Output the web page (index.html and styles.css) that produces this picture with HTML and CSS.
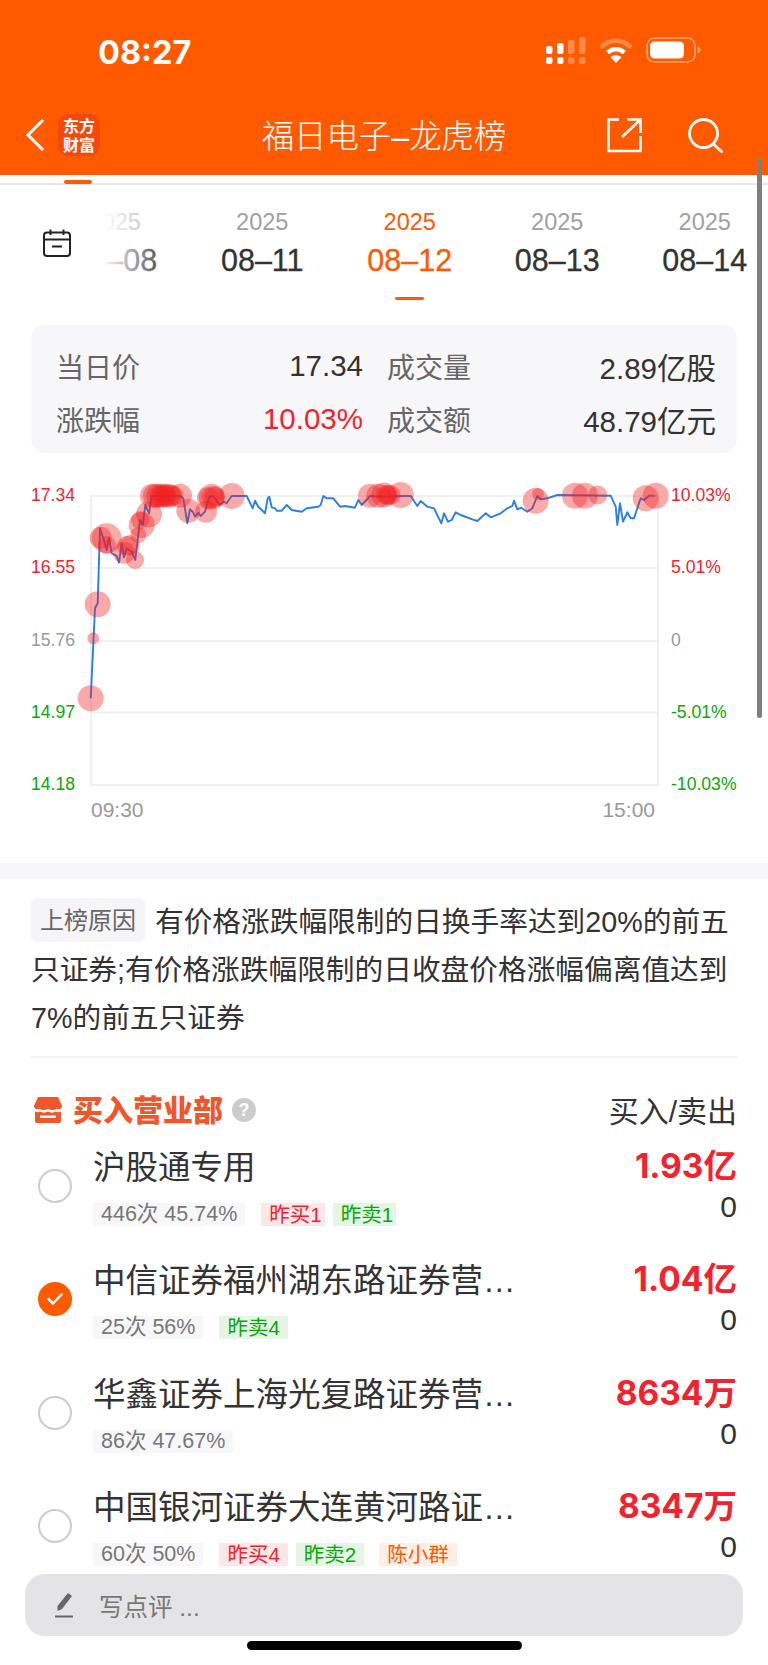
FILE: index.html
```html
<!DOCTYPE html>
<html lang="zh-CN">
<head>
    <meta charset="UTF-8">
    <meta name="viewport" content="width=device-width, initial-scale=1.0">
    <title>福日电子-龙虎榜</title>
    <link rel="stylesheet" href="styles.css">
</head>
<body>
<div class="page">

    <!-- Orange header -->
    <header class="header">
        <div class="status">
            <span class="time">08:27</span>
            <div class="status-icons">
                <svg class="signal" width="40" height="27" viewBox="0 0 40 27" fill="#fff">
                    <rect x="0" y="9" width="6.500" height="8" rx="2.200"/>
                    <rect x="0" y="20" width="6.500" height="7" rx="2.200"/>
                    <rect x="11" y="6" width="6.500" height="11" rx="2.200"/>
                    <rect x="11" y="20" width="6.500" height="7" rx="2.200"/>
                    <g opacity=".3">
                        <rect x="22" y="3" width="6.500" height="14" rx="2.200"/>
                        <rect x="22" y="20" width="6.500" height="7" rx="2.200"/>
                        <rect x="33" y="0" width="6.500" height="17" rx="2.200"/>
                        <rect x="33" y="20" width="6.500" height="7" rx="2.200"/>
                    </g>
                </svg>
                <svg class="wifi" width="34" height="25" viewBox="0 0 34 25" fill="none" stroke="#fff" stroke-width="4.500">
                    <path opacity=".3" d="M2 9.500C10.500 .5 23.500 .5 32 9.500"/>
                    <path d="M8.500 14.500C13.500 10 20.500 10 25.500 14.500"/>
                    <path fill="#fff" stroke="none" d="M17 25 11.500 19C14.800 16.500 19.200 16.500 22.500 19Z"/>
                </svg>
                <svg class="battery" width="55" height="26" viewBox="0 0 55 26" fill="none">
                    <rect x="1" y="1" width="48" height="24" rx="7.500" stroke="#fff" stroke-opacity=".45" stroke-width="1.600"/>
                    <rect x="4" y="4.500" width="34" height="17" rx="4.500" fill="#fff"/>
                    <path d="M51.500 9.500c2 .6 3 2 3 3.500s-1 2.900-3 3.500z" fill="#fff" fill-opacity=".45"/>
                </svg>
            </div>
        </div>
        <div class="nav">
            <div class="nav-left">
                <svg width="20" height="32" viewBox="0 0 20 32" fill="none" stroke="#fff" stroke-width="3" stroke-linecap="square">
                    <path d="M17 2 3 16l14 14"/>
                </svg>
                <div class="logo">东方<br>财富</div>
            </div>
            <div class="nav-title">福日电子–龙虎榜</div>
            <div class="nav-right">
                <svg width="35" height="35" viewBox="0 0 35 35" fill="none" stroke="#fff" stroke-width="2.600">
                    <path d="M12 1.500H1.500V33H33.500V18"/>
                    <path d="M15 19 33.500 1.500M20 1.500H33.500V15"/>
                </svg>
                <svg width="35" height="35" viewBox="0 0 35 35" fill="none" stroke="#fff" stroke-width="2.800">
                    <circle cx="15.500" cy="15.500" r="14"/>
                    <path d="M26 26.500 33.500 33.500" stroke-linecap="round"/>
                </svg>
            </div>
        </div>
    </header>

    <div class="subtab"><span class="subtab-mark"></span></div>

    <!-- Date strip -->
    <div class="dates">
        <div class="cal">
            <svg width="28" height="28" viewBox="0 0 28 28" fill="none" stroke="#222" stroke-width="2">
                <rect x="1" y="3.500" width="26" height="23.500" rx="3"/>
                <path d="M1 10.500H27M7.500 .5V6M20.500 .5V6M9 17.500H19"/>
            </svg>
        </div>
        <div class="date-strip">
            <div class="date first"><span class="year">2025</span><span class="day">08–08</span></div>
            <div class="date"><span class="year">2025</span><span class="day">08–11</span></div>
            <div class="date active"><span class="year">2025</span><span class="day">08–12</span><span class="date-mark"></span></div>
            <div class="date"><span class="year">2025</span><span class="day">08–13</span></div>
            <div class="date"><span class="year">2025</span><span class="day">08–14</span></div>
            <div class="date-fade"></div>
        </div>
    </div>

    <!-- Day summary -->
    <div class="stats">
        <div class="stat"><span class="label">当日价</span><span class="val">17.34</span></div>
        <div class="stat"><span class="label">成交量</span><span class="val">2.89亿股</span></div>
        <div class="stat"><span class="label">涨跌幅</span><span class="val red">10.03%</span></div>
        <div class="stat"><span class="label">成交额</span><span class="val">48.79亿元</span></div>
    </div>

    <!-- Intraday chart -->
    <svg class="chart" width="768" height="398" viewBox="0 465 768 398">
        <g fill="none" stroke="#f0f0f0" stroke-width="2">
            <path d="M91 496H658V785H91Z"/>
            <path d="M91 568H658M91 641H658M91 712.500H658"/>
        </g>
        <path fill="none" stroke="#2b7de9" stroke-width="1.900" stroke-linejoin="round" d="M90.700 698.300 95 608.300 97.700 603.300 100 528.300 103.300 538.300 106.700 550 109 538.300 111.700 553.300 116.700 556 119 562.700 121.700 543.300 124 557.300 126.700 548.300 131.700 551.700 135.300 560 140 520 142.700 525 145.300 505 149 513.300 151.700 496 180 496 183.300 498.300 187.300 523.300 190 509.300 192.700 511.700 195 516.700 198.300 512.700 200.700 516 205 511.700 209.300 496.700 213.300 496 220 505 224 501.700 226.700 503.300 231.700 496 246.700 496 252.700 508.300 255 500.700 258.300 506.700 265 513.300 267.700 498.300 269.300 496.700 271.700 507.300 275 508.300 276.700 510.700 281.700 510.700 286.700 505 291.700 510 301.700 511.700 306.700 508.300 318.300 506.700 320.700 505 323.300 496 326.700 498.300 333.300 498.300 340 506.700 345 506 355 507.700 358.300 500 361.700 505 370 496 384 496.700 404 496 410.700 496 417.300 506 420.700 501 427.300 506.700 434 508.300 441.300 523.300 444 513.300 448 521.700 451.700 520 455.700 512.300 460.700 515 472.300 519.300 477.300 521 485.700 513.300 490.700 517.300 500.700 513.300 507.300 508.300 512.300 506 514 500.700 517.300 509.300 521.300 507.700 527.300 511.700 532.300 508.300 537.300 496 540.700 499.300 547.300 498.300 557.300 495 610.700 495.700 615.700 506.700 617.300 525 620 503.300 623 521.700 627.300 512.300 630.700 518.300 634 518.300 640.700 498.300 644 500 649 495.700 654.700 495.700"/>
        <g fill="#f21e1e" fill-opacity=".38">
            <circle cx="90.700" cy="698.300" r="13"/>
            <circle cx="97.700" cy="604.300" r="13"/>
            <circle cx="93.300" cy="638.300" r="6"/>
            <circle cx="100.700" cy="537.700" r="11"/>
            <circle cx="106.700" cy="538.300" r="15"/>
            <circle cx="106.700" cy="545" r="9"/>
            <circle cx="124" cy="552.700" r="11"/>
            <circle cx="127" cy="546" r="10"/>
            <circle cx="130" cy="545" r="10"/>
            <circle cx="135" cy="560" r="9"/>
            <circle cx="138.300" cy="535" r="8"/>
            <circle cx="141.700" cy="525" r="13"/>
            <circle cx="149" cy="514.300" r="13"/>
            <circle cx="140" cy="520" r="9"/>
            <circle cx="152" cy="495.700" r="12"/>
            <circle cx="155" cy="495.700" r="12"/>
            <circle cx="158.300" cy="495.700" r="12"/>
            <circle cx="160.500" cy="495.700" r="11"/>
            <circle cx="163.300" cy="495.700" r="12"/>
            <circle cx="165.500" cy="495.700" r="11"/>
            <circle cx="168.300" cy="495.700" r="12"/>
            <circle cx="171" cy="495.700" r="11"/>
            <circle cx="173.300" cy="495.700" r="10"/>
            <circle cx="180" cy="495.700" r="12"/>
            <circle cx="188.300" cy="510.700" r="12"/>
            <circle cx="206" cy="511.700" r="11"/>
            <circle cx="211.700" cy="496.700" r="13"/>
            <circle cx="213" cy="497" r="11"/>
            <circle cx="215" cy="496.700" r="10"/>
            <circle cx="208" cy="498.300" r="11"/>
            <circle cx="231.700" cy="496" r="13"/>
            <circle cx="370" cy="495.700" r="12"/>
            <circle cx="378.300" cy="495.700" r="12"/>
            <circle cx="384" cy="495" r="12.500"/>
            <circle cx="386" cy="495" r="10"/>
            <circle cx="388" cy="495" r="10"/>
            <circle cx="390.700" cy="495" r="10"/>
            <circle cx="400.700" cy="495" r="13"/>
            <circle cx="535.700" cy="500.700" r="13"/>
            <circle cx="538" cy="494" r="6"/>
            <circle cx="575" cy="495.700" r="13"/>
            <circle cx="585" cy="495.700" r="13"/>
            <circle cx="597.700" cy="495" r="9.500"/>
            <circle cx="645.700" cy="498.300" r="13"/>
            <circle cx="655.700" cy="495.700" r="13"/>
        </g>
        <g class="axis">
            <text x="75" y="501.300" text-anchor="end" fill="#f5222d">17.34</text>
            <text x="75" y="573.300" text-anchor="end" fill="#f5222d">16.55</text>
            <text x="75" y="646.300" text-anchor="end" fill="#999">15.76</text>
            <text x="75" y="718.300" text-anchor="end" fill="#0aa70a">14.97</text>
            <text x="75" y="790.300" text-anchor="end" fill="#0aa70a">14.18</text>
            <text x="671" y="501.300" fill="#f5222d">10.03%</text>
            <text x="671" y="573.300" fill="#f5222d">5.01%</text>
            <text x="671" y="646.300" fill="#999">0</text>
            <text x="671" y="718.300" fill="#0aa70a">-5.01%</text>
            <text x="671" y="790.300" fill="#0aa70a">-10.03%</text>
        </g>
        <text class="axis-time" x="91" y="816.500" fill="#999">09:30</text>
        <text class="axis-time" x="655" y="816.500" text-anchor="end" fill="#999">15:00</text>
    </svg>

    <div class="band"></div>

    <!-- Listing reason -->
    <div class="reason">
        <span class="reason-tag">上榜原因</span>有价格涨跌幅限制的日换手率达到20%的前五只证券;有价格涨跌幅限制的日收盘价格涨幅偏离值达到7%的前五只证券
    </div>
    <div class="divider"></div>

    <!-- Buy side list -->
    <div class="list-head">
        <svg width="28" height="26" viewBox="0 0 28 26">
            <path fill="#f0562a" d="M4 0H24L28 9C28 12 25 13 22.500 11.500 20 13.500 17 13.500 14 11.500 11 13.500 8 13.500 5.500 11.500 3 13 0 12 0 9Z"/>
            <path fill="#f0562a" d="M1 14.500C3 15.500 5 15.500 6 14.500 9 16 11 16 14 14.500 17 16 19 16 22 14.500 23 15.500 25 15.500 27 14.500V24C27 25 26 26 25 26H3C2 26 1 25 1 24Z"/>
            <path fill="#fff" d="M6 18.500H22V21H6Z"/>
        </svg>
        <span class="list-title">买入营业部</span>
        <span class="help">?</span>
        <span class="list-cols">买入/卖出</span>
    </div>

    <div class="row">
        <span class="radio"></span>
        <div class="row-main">
            <div class="name">沪股通专用</div>
            <div class="tags"><span class="tag grey">446次 45.74%</span><span class="tag pink narrow">昨买1</span><span class="tag green narrow">昨卖1</span></div>
        </div>
        <div class="row-nums"><span class="buy">1.93亿</span><span class="sell">0</span></div>
    </div>
    <div class="row">
        <span class="radio on">
            <svg width="18" height="14" viewBox="0 0 18 14" fill="none" stroke="#fff" stroke-width="2.500" stroke-linecap="round" stroke-linejoin="round"><path d="M2.500 7 7 11.500 15.500 2.500"/></svg>
        </span>
        <div class="row-main">
            <div class="name">中信证券福州湖东路证券营业部</div>
            <div class="tags"><span class="tag grey">25次 56%</span><span class="tag green">昨卖4</span></div>
        </div>
        <div class="row-nums"><span class="buy">1.04亿</span><span class="sell">0</span></div>
    </div>
    <div class="row">
        <span class="radio"></span>
        <div class="row-main">
            <div class="name">华鑫证券上海光复路证券营业部</div>
            <div class="tags"><span class="tag grey">86次 47.67%</span></div>
        </div>
        <div class="row-nums"><span class="buy">8634万</span><span class="sell">0</span></div>
    </div>
    <div class="row">
        <span class="radio"></span>
        <div class="row-main">
            <div class="name">中国银河证券大连黄河路证券营业部</div>
            <div class="tags"><span class="tag grey">60次 50%</span><span class="tag pink">昨买4</span><span class="tag green">昨卖2</span><span class="tag orange">陈小群</span></div>
        </div>
        <div class="row-nums"><span class="buy">8347万</span><span class="sell">0</span></div>
    </div>

    <!-- Overlays -->
    <div class="scrollbar"></div>
    <div class="comment">
        <svg width="20" height="26" viewBox="0 0 20 26" fill="#666">
            <path d="M14 1 18 4 8 17 3.500 19 3.500 14Z"/>
            <path d="M1 23.500H19V25.500H1Z"/>
        </svg>
        <span>写点评 ...</span>
    </div>
    <div class="home"></div>
</div>
</body>
</html>
```

FILE: styles.css
```css
* {
    box-sizing: border-box;
}
body {
    margin: 0;
    background: #fff;
    font-family: "Liberation Sans", "Noto Sans CJK SC", sans-serif;
    color: #333;
}
.page {
    position: relative;
    width: 768px;
    height: 1665px;
    overflow: hidden;
}

/* header */
.header {
    height: 175px;
    background: #ff5a00;
    color: #fff;
}
.status {
    height: 105px;
    padding: 35px 67px 0 98px;
    display: flex;
    justify-content: space-between;
}
.time {
    font-family: Inter, sans-serif;
    font-weight: 700;
    font-size: 32.5px;
    line-height: 36px;
}
.status-icons {
    display: flex;
    align-items: center;
    height: 36px;
    gap: 13px;
    margin-top: -3px;
}
.nav {
    height: 70px;
    padding: 8px 45px 0 25px;
    display: flex;
    align-items: flex-start;
    justify-content: space-between;
    position: relative;
}
.nav-left {
    display: flex;
    align-items: center;
    gap: 13px;
    height: 44px;
}
.logo {
    width: 42px;
    height: 42px;
    border-radius: 10px;
    background: #f4490d;
    font-size: 16px;
    line-height: 19px;
    font-weight: 700;
    text-align: center;
    padding-top: 2px;
    font-family: "Noto Sans CJK SC", sans-serif;
}
.nav-title {
    position: absolute;
    left: 150px;
    right: 150px;
    top: 0;
    text-align: center;
    font-size: 32.4px;
    line-height: 64px;
    font-weight: 300;
}
.nav-right {
    display: flex;
    gap: 46px;
    margin-top: 5px;
}

.subtab {
    height: 10px;
    border-bottom: 2px solid #e8e8e8;
    padding-left: 64px;
    padding-top: 5px;
}
.subtab-mark {
    display: block;
    width: 28px;
    height: 4px;
    border-radius: 2px;
    background: #ff5a00;
}

/* dates */
.dates {
    display: flex;
    height: 140px;
}
.cal {
    width: 100px;
    flex: none;
    padding: 44px 0 0 43px;
}
.date-strip {
    flex: 1;
    display: flex;
    position: relative;
    overflow: hidden;
}
.date {
    flex: none;
    width: 147.5px;
    display: flex;
    flex-direction: column;
    align-items: center;
    padding-top: 23px;
}
.date.first {
    margin-left: -59px;
}
.year {
    font-size: 23.5px;
    line-height: 28px;
    color: #a0a0a0;
}
.day {
    font-size: 30.5px;
    line-height: 34px;
    margin-top: 7px;
    color: #333;
    -webkit-text-stroke: .3px currentColor;
}
.active .year, .active .day {
    color: #ff5a00;
}
.date-mark {
    width: 29px;
    height: 3px;
    margin-top: 20px;
    border-radius: 2px;
    background: #ff5a00;
}
.date-fade {
    position: absolute;
    left: 0;
    top: 0;
    bottom: 0;
    width: 70px;
    background: linear-gradient(to right, #fff 5%, rgba(255, 255, 255, 0));
}

/* stats */
.stats {
    margin: 0 31px;
    height: 128px;
    padding: 15px 21px 0 25px;
    background: #f7f7f9;
    border-radius: 14px;
    display: grid;
    grid-template-columns: 331px 1fr;
    grid-auto-rows: 52.5px;
}
.stat {
    display: flex;
    justify-content: space-between;
    align-items: center;
    font-size: 28px;
}
.stat:nth-child(odd) {
    padding-right: 24px;
}
.label {
    color: #666;
}
.val {
    color: #333;
    font-size: 29.5px;
}
.red {
    color: #f5222d;
}

/* chart */
.chart {
    display: block;
    margin-top: 12px;
}
.axis {
    font-size: 17.6px;
}
.axis-time {
    font-size: 21px;
}
.band {
    height: 16px;
    background: #f6f6f8;
}

/* reason */
.reason {
    margin: 19px 31px 0;
    font-size: 28.7px;
    line-height: 48px;
    color: #333;
}
.reason-tag {
    display: inline-block;
    width: 114px;
    height: 44px;
    margin-right: 10px;
    border-radius: 6px;
    background: #f5f5f7;
    color: #666;
    font-size: 24px;
    line-height: 46px;
    text-align: center;
    vertical-align: top;
}
.divider {
    height: 2px;
    margin: 14px 31px 0;
    background: #f3f3f3;
}

/* list */
.list-head {
    margin: 0 31px;
    height: 74px;
    padding-top: 29px;
    display: flex;
    align-items: center;
}
.list-head svg {
    margin-left: 3px;
    flex: none;
}
.list-title {
    margin-left: 11px;
    margin-bottom: 4px;
    font-size: 30px;
    font-weight: 900;
    color: #f0562a;
    font-family: "Noto Sans CJK SC", sans-serif;
}
.help {
    margin-left: 9px;
    width: 24px;
    height: 24px;
    border-radius: 50%;
    background: #ccc;
    color: #fff;
    font-size: 18px;
    font-weight: 700;
    line-height: 24px;
    text-align: center;
}
.list-cols {
    margin-left: auto;
    margin-bottom: 2px;
    font-size: 30px;
    color: #333;
}
.row {
    height: 113.3px;
    margin-left: 38px;
    margin-right: 31px;
    display: flex;
    align-items: flex-start;
    padding-top: 13px;
}
.radio {
    flex: none;
    width: 34px;
    height: 34px;
    margin-top: 24px;
    border-radius: 50%;
    border: 2.5px solid #ccc;
    display: flex;
    align-items: center;
    justify-content: center;
}
.radio.on {
    background: #ff5a00;
    border-color: #ff5a00;
}
.row-main {
    width: 430px;
    margin-left: 21px;
}
.name {
    font-size: 32.5px;
    line-height: 46px;
    color: #333;
    white-space: nowrap;
    overflow: hidden;
    text-overflow: ellipsis;
    width: 426px;
}
.tags {
    margin-top: 12px;
    display: flex;
    gap: 8px;
}
.tag {
    height: 23px;
    padding: 0 8px;
    font-size: 20.5px;
    line-height: 23px;
}
.tag.narrow {
    padding-right: 3px;
}
.grey {
    background: #f7f7f9;
    color: #777;
    margin-right: 8px;
    font-size: 21.5px;
}
.pink {
    background: #fde6e7;
    color: #f5222d;
}
.green {
    background: #e5f5e5;
    color: #0aa70a;
}
.orange {
    background: #ffeee6;
    color: #ff5a00;
    margin-left: 7px;
}
.row-nums {
    margin-left: auto;
    display: flex;
    flex-direction: column;
    align-items: flex-end;
}
.buy {
    font-family: Inter, "Noto Sans CJK SC", sans-serif;
    font-size: 33.5px;
    line-height: 42px;
    font-weight: 700;
    color: #f5222d;
}
.sell {
    font-size: 30px;
    line-height: 36px;
    margin-top: 2px;
    color: #333;
}

/* overlays */
.scrollbar {
    position: absolute;
    left: 757px;
    top: 158px;
    width: 5px;
    height: 560px;
    border-radius: 3px;
    background: #7f7f7f;
}
.comment {
    position: absolute;
    left: 25px;
    top: 1574px;
    width: 718px;
    height: 62px;
    padding-left: 29px;
    border-radius: 20px;
    background: #e4e4e6;
    display: flex;
    align-items: center;
    gap: 25px;
    color: #777;
    font-size: 24.5px;
}
.home {
    position: absolute;
    left: 247px;
    top: 1641px;
    width: 275px;
    height: 9px;
    border-radius: 5px;
    background: #000;
}
```
